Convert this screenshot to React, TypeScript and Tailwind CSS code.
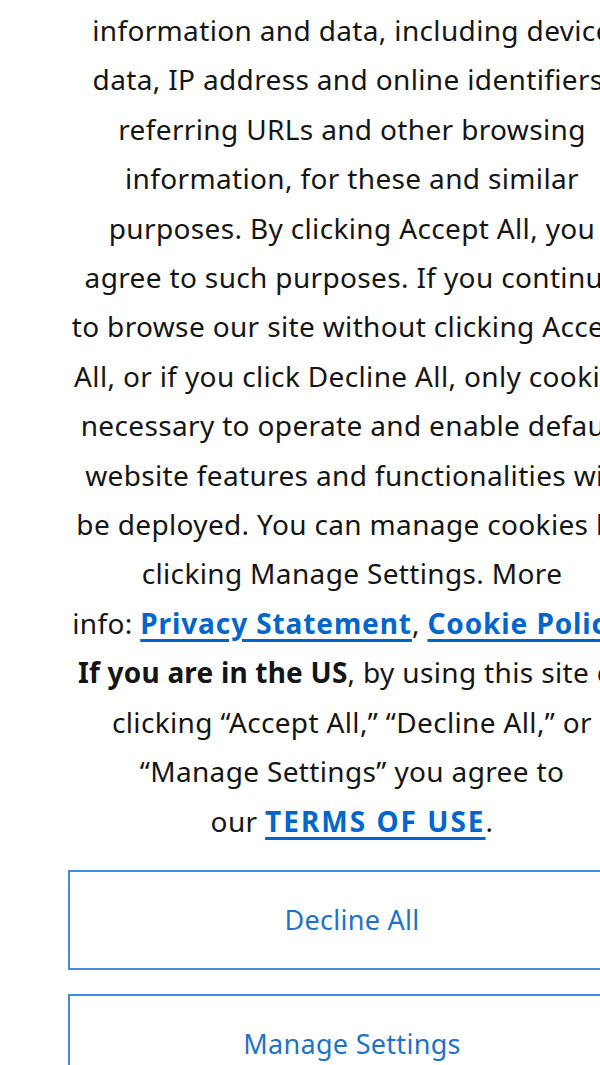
import React from "react";

const Link = ({
  children,
  className = "",
}: {
  children: React.ReactNode;
  className?: string;
}) => (
  <a
    href="#"
    className={
      "font-bold text-[#0066cc] underline decoration-[2.5px] underline-offset-[5px] " +
      className
    }
  >
    {children}
  </a>
);

export default function App() {
  const lines: React.ReactNode[] = [
    "information and data, including device",
    "data, IP address and online identifiers,",
    "referring URLs and other browsing",
    "information, for these and similar",
    "purposes. By clicking Accept All, you",
    "agree to such purposes. If you continue",
    "to browse our site without clicking Accept",
    "All, or if you click Decline All, only cookies",
    "necessary to operate and enable default",
    "website features and functionalities will",
    "be deployed. You can manage cookies by",
    "clicking Manage Settings. More",
    <>
      info: <Link className="tracking-[0.9px]">Privacy Statement</Link>,{" "}
      <Link className="tracking-[0.9px]">Cookie Policy</Link>.
    </>,
    <>
      <b className="font-bold tracking-[0.2px]">If you are in the US</b>, by using this site or
    </>,
    "clicking “Accept All,” “Decline All,” or",
    "“Manage Settings” you agree to",
    <>
      our <Link className="tracking-[2px]">TERMS OF USE</Link>.
    </>,
  ];
  return (
    <div className="w-[600px] h-[1065px] overflow-hidden bg-white">
      <div
        className="ml-[68px] w-[568px] pt-[6px] text-[#151515]"
        style={{ fontFamily: '"Noto Sans", "Open Sans", sans-serif' }}
      >
        <div className="flex flex-col items-center text-[28px] leading-[49.4px] tracking-[0.35px]">
          {lines.map((l, i) => (
            <div key={i} className="whitespace-nowrap">
              {l}
            </div>
          ))}
        </div>
        <div className="mt-[24px] flex flex-col gap-[24px]">
          <button className="h-[100px] w-full border-2 border-[#3f8ddb] text-[27px] tracking-[0.3px] text-[#1f72c8]">
            Decline All
          </button>
          <button className="h-[100px] w-full border-2 border-[#3f8ddb] text-[27px] tracking-[0.3px] text-[#1f72c8]">
            Manage Settings
          </button>
        </div>
      </div>
    </div>
  );
}
